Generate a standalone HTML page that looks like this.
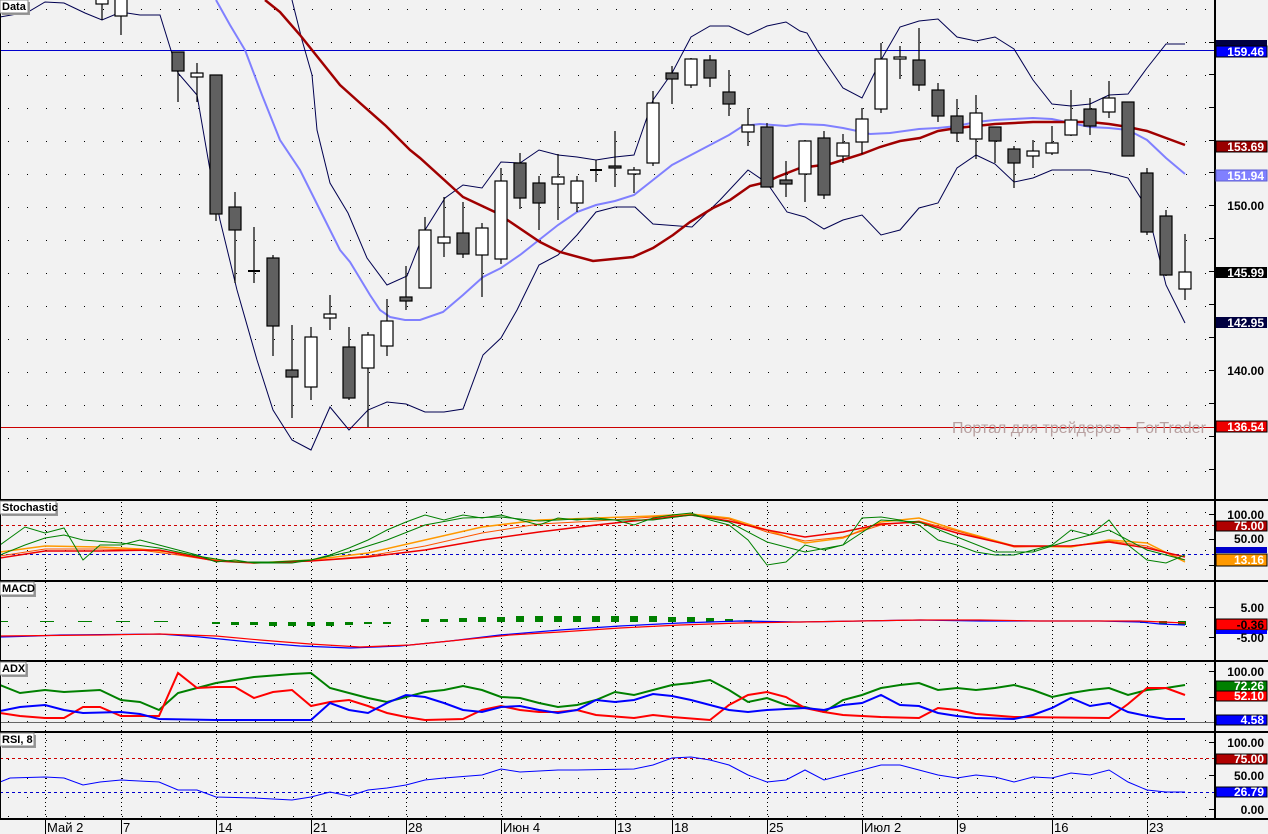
<!DOCTYPE html>
<html><head><meta charset="utf-8"><style>
html,body{margin:0;padding:0;background:#f2f2f2;}
svg{display:block;font-family:"Liberation Sans",sans-serif;}
.ax{font-size:12px;font-weight:bold;}
.bx{font-size:12px;font-weight:bold;fill:#fff;}
.lb{font-size:11px;font-weight:bold;}
.dt{font-size:13px;}
</style></head><body>
<svg width="1268" height="834" viewBox="0 0 1268 834" xmlns="http://www.w3.org/2000/svg">
<defs>
<pattern id="dots" x="8" y="42" width="19" height="33" patternUnits="userSpaceOnUse"><rect width="1" height="1" fill="#000"/></pattern>
<pattern id="dots2" x="8" y="512" width="19" height="19" patternUnits="userSpaceOnUse"><rect width="1" height="1" fill="#000"/></pattern>
<clipPath id="cm"><rect x="0" y="0" width="1215" height="499"/></clipPath>
</defs>
<rect width="1268" height="834" fill="#f2f2f2"/>
<!-- grid dots -->
<rect x="0" y="0" width="1215" height="499" fill="url(#dots)"/>
<rect x="0" y="502" width="1215" height="78" fill="url(#dots2)"/>
<rect x="0" y="583" width="1215" height="77" fill="url(#dots2)"/>
<rect x="0" y="663" width="1215" height="68" fill="url(#dots2)"/>
<rect x="0" y="734" width="1215" height="84" fill="url(#dots2)"/>
<!-- vertical dotted date lines in subpanels -->
<g stroke="#000" stroke-width="1" stroke-dasharray="1,3">
<path d="M45.5 502V818M121.5 502V818M216.5 502V818M311.5 502V818M406.5 502V818M501.5 502V818M615.5 502V818M672.5 502V818M767.5 502V818M862.5 502V818M957.5 502V818M1052.5 502V818M1147.5 502V818"/>
</g>

<g clip-path="url(#cm)">
<!-- horizontal lines -->
<line x1="0" y1="50.5" x2="1215" y2="50.5" stroke="#0000cc" stroke-width="1"/>
<line x1="0" y1="427.5" x2="1215" y2="427.5" stroke="#cc0000" stroke-width="1"/>
<!-- watermark -->
<text x="952" y="433" font-size="16" fill="#b8a0a0" font-family="Liberation Sans,sans-serif">Портал для трейдеров - ForTrader</text>
<!-- bands -->
<polyline fill="none" stroke="#000050" stroke-width="1" points="292,0 302,40 312,75 317,130 330,183 348,213 367,258 387,285 407,276 425,230 445,198 463,185 482,188 501,162 520,163 539,150 558,155 577,157 596,160 615,157 634,155 653,100 672,73 691,37 710,26 729,26 748,35 767,26 786,22 800,31 807,33 817,50 843,88 862,98 881,60 900,27 919,21 938,19 957,37 976,41 995,37 1014,49 1033,80 1052,104 1071,106 1090,104 1109,95 1128,94 1147,68 1166,44 1185,44"/>
<polyline fill="none" stroke="#000050" stroke-width="1" points="0,17 28,12 45,2 64,3 85,13 102,20 121,12 140,15 160,15 178,73 197,95 210,170 220,220 237,290 257,360 273,410 292,440 311,450 330,407 349,430 368,410 387,402 406,404 425,412 444,412 463,409 483,355 501,338 517,310 539,265 558,255 577,235 596,212 615,207 635,207 653,224 692,227 720,200 748,170 767,183 787,212 805,217 824,229 843,220 862,215 881,235 900,230 919,208 938,203 957,168 976,155 995,164 1014,182 1033,178 1052,170 1090,170 1109,173 1128,178 1147,208 1166,285 1185,323"/>
<polyline fill="none" stroke="#8080ff" stroke-width="2" points="216,0 230,25 245,50 262,95 280,140 300,170 320,210 340,250 350,262 370,295 380,310 390,317 405,320 420,320 443,312 463,295 483,277 501,268 520,255 539,240 558,225 577,212 596,205 615,201 634,195 653,180 672,165 691,155 710,145 729,135 743,126 760,124 786,126 800,124 824,125 843,128 862,132 870,134 890,133 919,129 938,128 957,126 976,122 995,120 1014,119 1033,118 1052,119 1071,123 1090,127 1109,128 1128,130 1147,140 1166,158 1185,174"/>
<polyline fill="none" stroke="#a00000" stroke-width="2.5" points="265,0 280,12 300,35 320,60 340,85 360,103 386,126 410,150 420,158 463,197 497,213 540,242 560,252 593,261 613,259 633,257 653,248 673,235 690,222 713,208 730,200 750,186 767,182 777,177 800,168 830,164 862,154 880,147 900,141 920,138 938,131 957,128 976,126 995,124 1033,122 1090,122 1109,124 1128,127 1147,131 1166,138 1185,145"/>
<!-- candles -->
<g stroke="#000" stroke-width="1.2">
<path d="M102 0V20M121 0V35M178 52V102M197 63V102M216 75V221M235 192V283M254 227V283M273 255V356M292 325V418M311 327V400M330 295V330M349 327V400M368 332V427M387 299V356M406 266V310M425 217V288M444 197V257M463 202V258M482 223V297M501 168V264M520 153V209M539 176V230M558 154V220M577 176V212M596 160V182M615 131V187M634 167V193M653 91V166M672 66V104M691 58V88M710 55V87M729 70V116M748 108V146M767 123V187M786 161V197M805 140V202M824 131V199M843 134V163M862 108V154M881 43V113M900 46V79M919 28V91M938 83V122M957 99V142M976 95V159M995 127V163M1014 146V188M1033 140V168M1052 126V155M1071 90V136M1090 98V135M1109 81V118M1128 102V156M1147 168V235M1166 210V276M1185 234V300"/>
<g fill="#fff">
<rect x="96" y="-2" width="12" height="6"/><rect x="115" y="-2" width="12" height="18"/>
<rect x="191" y="73" width="12" height="4"/><rect x="305" y="337" width="12" height="50"/>
<rect x="324" y="314" width="12" height="4"/><rect x="362" y="335" width="12" height="33"/>
<rect x="381" y="321" width="12" height="25"/><rect x="419" y="230" width="12" height="58"/>
<rect x="438" y="237" width="12" height="6"/><rect x="476" y="228" width="12" height="27"/>
<rect x="495" y="181" width="12" height="78"/><rect x="552" y="177" width="12" height="7"/>
<rect x="571" y="181" width="12" height="22"/><rect x="628" y="170" width="12" height="4"/>
<rect x="647" y="103" width="12" height="60"/><rect x="685" y="59" width="12" height="26"/>
<rect x="742" y="125" width="12" height="7"/><rect x="799" y="141" width="12" height="33"/>
<rect x="837" y="143" width="12" height="13"/><rect x="856" y="119" width="12" height="23"/>
<rect x="875" y="59" width="12" height="50"/><rect x="894" y="57" width="12" height="2"/>
<rect x="970" y="113" width="12" height="26"/><rect x="1027" y="151" width="12" height="5"/>
<rect x="1046" y="143" width="12" height="10"/><rect x="1065" y="120" width="12" height="15"/>
<rect x="1103" y="98" width="12" height="14"/><rect x="1179" y="272" width="12" height="17"/>
</g>
<g fill="#606060">
<rect x="172" y="52" width="12" height="19"/><rect x="210" y="75" width="12" height="139"/>
<rect x="229" y="207" width="12" height="23"/><rect x="267" y="258" width="12" height="68"/>
<rect x="286" y="370" width="12" height="7"/><rect x="343" y="347" width="12" height="51"/>
<rect x="400" y="297" width="12" height="4"/><rect x="457" y="233" width="12" height="21"/>
<rect x="514" y="163" width="12" height="35"/><rect x="533" y="183" width="12" height="20"/>
<rect x="609" y="166" width="12" height="2"/><rect x="666" y="73" width="12" height="6"/>
<rect x="704" y="60" width="12" height="18"/><rect x="723" y="92" width="12" height="12"/>
<rect x="761" y="127" width="12" height="60"/><rect x="780" y="180" width="12" height="4"/>
<rect x="818" y="138" width="12" height="57"/><rect x="913" y="60" width="12" height="25"/>
<rect x="932" y="90" width="12" height="26"/><rect x="951" y="116" width="12" height="17"/>
<rect x="989" y="127" width="12" height="14"/><rect x="1008" y="149" width="12" height="14"/>
<rect x="1084" y="109" width="12" height="17"/><rect x="1122" y="102" width="12" height="54"/>
<rect x="1141" y="173" width="12" height="59"/><rect x="1160" y="216" width="12" height="59"/>
</g>
<path d="M248 271H260M590 170H602" stroke-width="2"/>
</g>
</g>

<!-- Stochastic -->
<line x1="0" y1="525.5" x2="1215" y2="525.5" stroke="#cc0000" stroke-dasharray="3,3"/>
<line x1="0" y1="554.5" x2="1215" y2="554.5" stroke="#0000cc" stroke-dasharray="3,3"/>
<polyline fill="none" stroke="#ff9900" stroke-width="1.5" points="0,552 45,546 100,547 140,549 178,553 216,560 254,563 311,560 368,553 425,540 482,527 539,520 596,518 653,516 691,514 729,518 767,530 805,543 843,538 881,522 919,518 957,530 1014,546 1071,547 1109,540 1147,543 1185,562"/>
<polyline fill="none" stroke="#ff5500" stroke-width="1" points="0,556 45,549 100,549 140,550 178,555 216,561 254,563 311,561 368,556 425,546 482,533 539,524 596,521 653,517 691,515 729,519 767,532 805,541 843,537 881,525 919,521 957,531 1014,547 1071,546 1109,541 1147,546 1185,560"/>
<polyline fill="none" stroke="#ee0000" stroke-width="1.5" points="0,558 45,551 100,551 159,550 216,561 254,563 311,561 368,557 425,550 482,540 539,532 596,525 653,519 691,515 729,521 767,530 805,537 843,532 881,524 919,522 957,533 1014,546 1071,546 1109,542 1147,548 1185,557"/>
<polyline fill="none" stroke="#008000" stroke-width="1" points="0,545 25,527 45,533 64,528 83,560 100,545 121,545 140,540 159,545 178,550 197,555 216,562 235,560 254,563 292,563 311,560 330,555 349,548 368,540 387,530 406,522 425,515 444,520 463,515 482,518 501,515 520,520 539,525 558,518 577,520 596,518 615,520 634,525 653,518 672,515 691,513 710,520 729,525 748,540 767,565 786,562 805,545 824,550 843,545 862,518 881,517 900,520 919,525 938,540 957,545 976,552 995,555 1014,555 1033,550 1052,545 1071,530 1090,535 1109,520 1128,545 1147,560 1166,563 1185,555"/>
<polyline fill="none" stroke="#008000" stroke-width="1" points="0,555 25,545 45,538 64,535 83,540 121,543 159,548 197,556 235,562 273,562 311,560 349,552 387,540 425,525 463,518 501,517 539,521 577,519 615,520 653,520 691,515 729,522 767,542 805,552 843,545 881,520 919,522 957,537 995,552 1033,552 1071,540 1109,530 1147,550 1185,560"/>

<!-- MACD -->
<g fill="#008000">
<rect x="0" y="621" width="8" height="1"/><rect x="40" y="621" width="14" height="1"/><rect x="78" y="621" width="14" height="1"/><rect x="116" y="621" width="14" height="1"/><rect x="154" y="621" width="14" height="1"/>
<rect x="212" y="622" width="8" height="2"/><rect x="231" y="622" width="8" height="3"/><rect x="250" y="622" width="8" height="3"/><rect x="269" y="622" width="8" height="4"/><rect x="288" y="622" width="8" height="4"/><rect x="307" y="622" width="8" height="4"/><rect x="326" y="622" width="8" height="4"/><rect x="345" y="622" width="8" height="3"/><rect x="364" y="622" width="8" height="2"/><rect x="383" y="622" width="8" height="2"/>
<rect x="421" y="619" width="8" height="3"/><rect x="440" y="619" width="8" height="3"/><rect x="459" y="618" width="8" height="4"/><rect x="478" y="617" width="8" height="5"/><rect x="497" y="617" width="8" height="5"/><rect x="516" y="616" width="8" height="6"/><rect x="535" y="616" width="8" height="6"/><rect x="554" y="616" width="8" height="6"/><rect x="573" y="616" width="8" height="6"/><rect x="592" y="616" width="8" height="6"/><rect x="611" y="616" width="8" height="6"/><rect x="630" y="616" width="8" height="6"/><rect x="649" y="616" width="8" height="6"/><rect x="668" y="617" width="8" height="5"/><rect x="687" y="617" width="8" height="5"/><rect x="706" y="618" width="8" height="4"/><rect x="725" y="619" width="8" height="3"/><rect x="744" y="620" width="8" height="2"/><rect x="763" y="621" width="8" height="1"/>
<rect x="1140" y="621" width="8" height="2"/><rect x="1159" y="621" width="8" height="3"/><rect x="1178" y="621" width="8" height="4"/>
</g>
<polyline fill="none" stroke="#0000ff" stroke-width="1.2" points="0,637 35,636 60,635 160,634 200,637 250,642 300,646 350,648 400,646 450,641 500,635 560,630 620,626 680,623 740,621 800,622 860,621 920,620 980,621 1040,621 1100,621 1140,622 1160,624 1185,625"/>
<polyline fill="none" stroke="#ff0000" stroke-width="1.2" points="0,636 100,635 160,634 216,636 260,640 310,644 360,647 410,645 460,640 510,635 560,632 620,628 680,625 740,623 800,622 860,621 920,620 980,620 1040,621 1100,621 1140,621 1185,623"/>

<!-- ADX -->
<line x1="0" y1="722.5" x2="1215" y2="722.5" stroke="#666"/>
<polyline fill="none" stroke="#008000" stroke-width="2" points="0,685 20,693 45,690 64,692 100,690 121,700 140,702 159,710 178,693 197,688 216,683 254,677 292,674 311,673 330,688 349,693 368,698 387,702 406,697 425,692 444,690 463,686 482,690 501,697 520,698 539,703 558,707 577,705 596,700 615,692 634,695 653,690 672,685 691,683 710,680 729,690 748,702 767,698 786,705 805,707 824,712 843,700 862,695 881,688 900,685 919,683 938,690 957,688 976,690 995,688 1014,685 1033,690 1052,697 1071,693 1090,690 1109,688 1128,695 1147,690 1166,688 1185,685"/>
<polyline fill="none" stroke="#ff0000" stroke-width="2" points="0,713 20,716 45,718 64,718 83,707 100,707 121,716 159,716 178,673 197,688 216,687 235,687 254,698 273,692 292,690 311,706 330,702 349,700 368,706 387,713 406,717 425,720 463,719 482,710 501,706 520,710 539,712 558,712 577,710 596,715 634,718 653,715 672,717 710,720 729,705 748,695 767,692 786,697 805,708 824,712 843,715 881,717 919,718 938,708 957,710 976,714 1014,717 1109,718 1128,704 1147,688 1166,688 1185,695"/>
<polyline fill="none" stroke="#0000ff" stroke-width="2" points="0,711 20,707 45,705 64,710 83,713 121,712 140,714 159,719 216,720 311,720 330,703 349,710 368,713 387,703 406,695 425,697 444,703 463,710 482,712 501,707 520,706 539,710 558,713 577,710 596,700 615,702 634,700 653,694 672,696 691,700 710,705 729,710 748,712 767,710 805,708 824,710 843,705 862,703 881,695 900,705 919,706 938,713 957,716 976,718 1014,719 1033,715 1052,708 1071,698 1090,706 1109,703 1128,712 1147,716 1166,719 1185,719"/>

<!-- RSI -->
<line x1="0" y1="758.5" x2="1215" y2="758.5" stroke="#cc0000" stroke-dasharray="3,3"/>
<line x1="0" y1="792.5" x2="1215" y2="792.5" stroke="#0000cc" stroke-dasharray="3,3"/>
<polyline fill="none" stroke="#0000ff" stroke-width="1" points="0,782 10,778 45,777 64,778 83,785 100,782 121,780 159,782 178,790 197,790 216,797 254,798 292,800 311,797 330,792 349,796 368,790 387,788 406,785 425,780 444,778 482,775 501,769 520,772 558,770 577,770 634,769 653,765 672,758 691,757 710,760 729,765 748,775 767,782 786,780 805,770 824,780 843,775 862,770 881,765 900,765 919,770 938,775 957,778 976,775 995,777 1014,782 1033,777 1052,778 1071,773 1090,775 1109,770 1128,782 1147,790 1166,792 1185,792"/>

<!-- panel frames -->
<g fill="#000">
<rect x="0" y="499" width="1268" height="2"/>
<rect x="0" y="580" width="1268" height="2"/>
<rect x="0" y="660" width="1268" height="2"/>
<rect x="0" y="731" width="1268" height="2"/>
<rect x="0" y="818" width="1268" height="2"/>
<rect x="1214" y="0" width="2" height="820"/>
<rect x="0" y="0" width="1" height="820"/>
</g>
<!-- right axis ticks -->
<g stroke="#000"><path d="M1209 42.5H1215M1209 74.5H1215M1209 107.5H1215M1209 140.5H1215M1209 172.5H1215M1209 205.5H1215M1209 238.5H1215M1209 271.5H1215M1209 304.5H1215M1209 337.5H1215M1209 370.5H1215M1209 403.5H1215M1209 436.5H1215M1209 469.5H1215M1209 514.5H1215M1209 539.5H1215M1209 565.5H1215M1209 607.5H1215M1209 637.5H1215M1209 671.5H1215M1209 697.5H1215M1209 742.5H1215M1209 775.5H1215M1209 809.5H1215"/></g>

<!-- axis labels -->
<rect x="1216" y="40" width="51" height="7" fill="#000040"/>
<rect x="1216" y="46" width="51" height="11" fill="#0000ff" stroke="#000"/>
<text x="1264" y="56" text-anchor="end" class="bx">159.46</text>
<rect x="1216" y="141" width="51" height="11" fill="#990000" stroke="#000"/>
<text x="1264" y="151" text-anchor="end" class="bx">153.69</text>
<rect x="1216" y="170" width="51" height="11" fill="#8080ff" stroke="#6060d0"/>
<text x="1264" y="180" text-anchor="end" class="bx">151.94</text>
<text x="1264" y="210" text-anchor="end" class="ax">150.00</text>
<rect x="1216" y="267" width="51" height="11" fill="#000"/>
<text x="1264" y="277" text-anchor="end" class="bx">145.99</text>
<rect x="1216" y="317" width="51" height="11" fill="#000040"/>
<text x="1264" y="327" text-anchor="end" class="bx">142.95</text>
<text x="1264" y="375" text-anchor="end" class="ax">140.00</text>
<rect x="1216" y="421" width="51" height="11" fill="#ee0000" stroke="#000"/>
<text x="1264" y="431" text-anchor="end" class="bx">136.54</text>

<text x="1264" y="519" text-anchor="end" class="ax">100.00</text>
<rect x="1216" y="521" width="51" height="10" fill="#b00000" stroke="#000"/>
<text x="1264" y="530" text-anchor="end" class="bx">75.00</text>
<text x="1264" y="543" text-anchor="end" class="ax">50.00</text>
<rect x="1216" y="547" width="51" height="6" fill="#0000cc"/>
<rect x="1216" y="554" width="51" height="12" fill="#ff9900" stroke="#000"/>
<text x="1264" y="564" text-anchor="end" class="bx">13.16</text>

<text x="1264" y="612" text-anchor="end" class="ax">5.00</text>
<rect x="1216" y="619" width="51" height="11" fill="#ff0000" stroke="#000"/>
<text x="1264" y="629" text-anchor="end" class="ax">-0.36</text>
<rect x="1216" y="630" width="51" height="4" fill="#0000ff"/>
<text x="1264" y="642" text-anchor="end" class="ax">-5.00</text>

<text x="1264" y="676" text-anchor="end" class="ax">100.00</text>
<rect x="1216" y="681" width="51" height="10" fill="#008000" stroke="#000"/>
<text x="1264" y="690" text-anchor="end" class="bx">72.26</text>
<rect x="1216" y="691" width="51" height="10" fill="#ff0000" stroke="#000"/>
<text x="1264" y="700" text-anchor="end" class="bx">52.10</text>
<rect x="1216" y="715" width="51" height="10" fill="#0000ff" stroke="#000"/>
<text x="1264" y="724" text-anchor="end" class="bx">4.58</text>

<text x="1264" y="747" text-anchor="end" class="ax">100.00</text>
<rect x="1216" y="754" width="51" height="10" fill="#b00000" stroke="#000"/>
<text x="1264" y="763" text-anchor="end" class="bx">75.00</text>
<text x="1264" y="780" text-anchor="end" class="ax">50.00</text>
<rect x="1216" y="787" width="51" height="10" fill="#0000ff" stroke="#000"/>
<text x="1264" y="796" text-anchor="end" class="bx">26.79</text>
<text x="1264" y="814" text-anchor="end" class="ax">0.00</text>

<!-- panel title boxes -->
<g>
<rect x="2" y="2" width="28" height="13" fill="#999"/><rect x="0" y="0" width="28" height="13" fill="#fff" stroke="#888"/>
<text x="2" y="10" class="lb">Data</text>
<rect x="2" y="503" width="56" height="13" fill="#999"/><rect x="0" y="501" width="56" height="13" fill="#fff" stroke="#888"/>
<text x="2" y="511" class="lb">Stochastic</text>
<rect x="2" y="584" width="34" height="13" fill="#999"/><rect x="0" y="582" width="34" height="13" fill="#fff" stroke="#888"/>
<text x="2" y="592" class="lb">MACD</text>
<rect x="2" y="664" width="26" height="13" fill="#999"/><rect x="0" y="662" width="26" height="13" fill="#fff" stroke="#888"/>
<text x="2" y="672" class="lb">ADX</text>
<rect x="2" y="735" width="34" height="13" fill="#999"/><rect x="0" y="733" width="34" height="13" fill="#fff" stroke="#888"/>
<text x="2" y="743" class="lb">RSI, 8</text>
</g>

<!-- date axis -->
<g stroke="#000"><path d="M45.5 820V834M121.5 820V834M216.5 820V834M311.5 820V834M406.5 820V834M501.5 820V834M615.5 820V834M672.5 820V834M767.5 820V834M862.5 820V834M957.5 820V834M1052.5 820V834M1147.5 820V834"/></g>
<g class="dt">
<text x="47" y="832">Май 2</text><text x="123" y="832">7</text><text x="218" y="832">14</text><text x="313" y="832">21</text><text x="408" y="832">28</text><text x="503" y="832">Июн 4</text><text x="617" y="832">13</text><text x="674" y="832">18</text><text x="769" y="832">25</text><text x="864" y="832">Июл 2</text><text x="959" y="832">9</text><text x="1054" y="832">16</text><text x="1149" y="832">23</text>
</g>
</svg>
</body></html>
